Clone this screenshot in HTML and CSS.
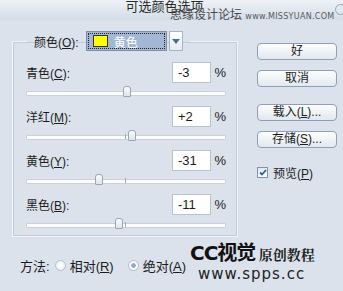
FILE: index.html
```html
<!DOCTYPE html>
<html lang="zh-CN">
<head>
    <meta charset="UTF-8">
    <title>可选颜色选项</title>
    <link rel="stylesheet" href="styles.css">
</head>
<body>
    <div class="dialog">
        <div class="titlebar">
            <span class="title">可选颜色选项</span>
            <span class="close"></span>
        </div>
        <div class="wm-top">思缘设计论坛 <span>www.MISSYUAN.COM</span></div>

        <div class="main">
            <fieldset class="group">
                <legend>
                    <span class="lbl">颜色(<u>O</u>):</span>
                    <span class="select">
                        <span class="select-val"><i class="swatch"></i>黄色</span>
                        <span class="select-arr"></span>
                    </span>
                </legend>

                <div class="row">
                    <div class="row-top">
                        <span class="lbl">青色(<u>C</u>):</span>
                        <span class="num">-3</span>
                        <span class="pct">%</span>
                    </div>
                    <div class="slider"><i class="tick"></i><i class="thumb" style="left: 97px"></i></div>
                </div>
                <div class="row">
                    <div class="row-top">
                        <span class="lbl">洋红(<u>M</u>):</span>
                        <span class="num">+2</span>
                        <span class="pct">%</span>
                    </div>
                    <div class="slider"><i class="tick"></i><i class="thumb" style="left: 102px"></i></div>
                </div>
                <div class="row">
                    <div class="row-top">
                        <span class="lbl">黄色(<u>Y</u>):</span>
                        <span class="num">-31</span>
                        <span class="pct">%</span>
                    </div>
                    <div class="slider"><i class="tick"></i><i class="thumb" style="left: 69px"></i></div>
                </div>
                <div class="row">
                    <div class="row-top">
                        <span class="lbl">黑色(<u>B</u>):</span>
                        <span class="num">-11</span>
                        <span class="pct">%</span>
                    </div>
                    <div class="slider"><i class="tick"></i><i class="thumb" style="left: 89px"></i></div>
                </div>
            </fieldset>

            <div class="side">
                <a href="javascript:;" class="btn">好</a>
                <a href="javascript:;" class="btn">取消</a>
                <a href="javascript:;" class="btn btn-gap">载入(<u>L</u>)...</a>
                <a href="javascript:;" class="btn">存储(<u>S</u>)...</a>
                <label class="check">
                    <span class="box">
                        <svg width="8" height="7" viewBox="0 0 8 7"><path d="M1 3.5 L3 5.5 L7 1" fill="none" stroke="#2f5f9e" stroke-width="1.8"/></svg>
                    </span>
                    <span>预览(<u>P</u>)</span>
                </label>
            </div>
        </div>

        <div class="method">
            <span>方法:</span>
            <span class="radio"><i class="dot"></i><span>相对(<u>R</u>)</span></span>
            <span class="radio on"><i class="dot"></i><span>绝对(<u>A</u>)</span></span>
        </div>

        <div class="wm-bottom">
            <div class="wm-line1"><b>CC视觉</b> <span>原创教程</span></div>
            <div class="wm-line2">www.spps.cc</div>
        </div>
    </div>
</body>
</html>
```

FILE: styles.css
```css
*{
    padding: 0;
    margin: 0;
    box-sizing: border-box;
}
a{
    text-decoration: none;
    color: inherit;
}
u{
    text-decoration: underline;
    text-underline-offset: 1px;
}
body{
    width: 343px;
    height: 291px;
    overflow: hidden;
    background-color: #dbe2eb;
    font-family: "Liberation Sans", "Noto Sans CJK SC", sans-serif;
    font-size: 12px;
    color: #1c1c1c;
}
.dialog{
    position: relative;
    height: 291px;
}
.titlebar{
    height: 20px;
    background: linear-gradient(#eef2f7, #d3dce7);
    position: relative;
    text-align: center;
    padding-right: 14px;
}
.titlebar .title{
    font-size: 13px;
    line-height: 14px;
    color: #2b2b2b;
}
.titlebar .close{
    position: absolute;
    right: -3px;
    top: 4px;
    width: 11px;
    height: 11px;
    border: 1px solid #9aa6b4;
    border-radius: 50%;
}
.wm-top{
    position: absolute;
    left: 170px;
    top: 8px;
    font-size: 12px;
    line-height: 14px;
    color: #4a4a4a;
}
.wm-top span{
    font-size: 8px;
    letter-spacing: 0.3px;
    color: #5a5a5a;
    font-family: "DejaVu Sans", sans-serif;
}

.main{
    display: flex;
    gap: 19px;
    padding: 11px 0 0 12px;
}
.group{
    width: 226px;
    height: 206px;
    border: 1px solid #f2f5f8;
    box-shadow: 0 0 0 1px #c3cdd9 inset;
    padding: 11px 0 0 13px;
}
.group legend{
    margin-left: 1px;
    padding: 0 7px;
    display: flex;
    align-items: center;
    gap: 7px;
}
.select{
    display: flex;
    height: 20px;
}
.select-val{
    width: 81px;
    height: 20px;
    border: 1px solid #7f8fa5;
    background-color: #a3b7d4;
    color: #fff;
    display: flex;
    align-items: center;
    padding-left: 6px;
    gap: 6px;
    outline: 1px dotted #222;
    outline-offset: -3px;
}
.swatch{
    width: 15px;
    height: 12px;
    background-color: #ffff00;
    border: 1px solid #333;
}
.select-arr{
    width: 14px;
    height: 20px;
    background: linear-gradient(#ffffff, #e6ebf2);
    border: 1px solid #a7b4c4;
    margin-left: 2px;
    position: relative;
}
.select-arr::after{
    content: "";
    position: absolute;
    left: 2px;
    top: 7px;
    border-left: 4px solid transparent;
    border-right: 4px solid transparent;
    border-top: 5px solid #4d6c9a;
}

.row-top{
    display: flex;
    align-items: center;
    height: 21px;
    padding-right: 11px;
}
.row-top .lbl{
    flex: 1;
}
.num{
    width: 39px;
    height: 21px;
    background-color: #fff;
    border: 1px solid #b5c3d3;
    padding-left: 5px;
    line-height: 19px;
    font-size: 13px;
}
.pct{
    width: 15px;
    text-align: right;
    font-size: 13px;
}
.slider{
    position: relative;
    height: 23px;
    width: 200px;
}
.row:last-child .slider{
    height: 20px;
}
.slider::before{
    content: "";
    position: absolute;
    left: 0;
    right: 0;
    top: 8px;
    height: 3px;
    background-color: #fbfcfd;
    border: 1px solid #c9d2dc;
    border-radius: 1px;
}
.tick{
    position: absolute;
    left: 99px;
    top: 7px;
    width: 1px;
    height: 5px;
    background-color: #9eaabb;
}
.thumb{
    position: absolute;
    top: 3px;
    width: 8px;
    height: 11px;
    background: linear-gradient(#fbfcfd, #dfe5ec);
    border: 1px solid #98a6b7;
    border-radius: 3px 3px 1px 1px;
}

.side{
    padding-top: 12px;
    width: 80px;
}
.btn{
    display: block;
    width: 80px;
    height: 17px;
    line-height: 15px;
    text-align: center;
    border: 1px solid #8da0b8;
    border-radius: 4px;
    background: linear-gradient(#fdfdfe, #e2e8ef);
    margin-bottom: 10px;
}
.btn-gap{
    margin-top: 17px;
}
.check{
    display: flex;
    align-items: center;
    gap: 5px;
    margin-top: 16px;
}
.box{
    width: 11px;
    height: 11px;
    border: 1px solid #7d93b2;
    background: linear-gradient(#dfe7f2, #fff);
    display: flex;
    align-items: center;
    justify-content: center;
}

.method{
    display: flex;
    align-items: center;
    padding: 19px 0 0 20px;
    gap: 4px;
    font-size: 13px;
}
.radio{
    display: flex;
    align-items: center;
    gap: 4px;
    margin-left: 1px;
}
.radio + .radio{
    margin-left: 10px;
}
.dot{
    width: 11px;
    height: 11px;
    border-radius: 50%;
    border: 1px solid #b4c0ce;
    background: radial-gradient(#ffffff, #e5eaf0);
}
.radio.on .dot{
    background: radial-gradient(circle, #8da6d2 0 2px, #ffffff 2.5px, #e5eaf0);
}

.wm-bottom{
    position: absolute;
    left: 190px;
    top: 242px;
}
.wm-line1{
    line-height: 22px;
}
.wm-line1 b{
    font-family: "DejaVu Sans", "Noto Sans CJK SC", sans-serif;
    font-size: 20px;
    font-weight: bold;
    color: #111;
    letter-spacing: -1px;
}
.wm-line1 span{
    font-family: "Noto Serif CJK SC", "Liberation Serif", serif;
    font-size: 14px;
    font-weight: bold;
    color: #222;
}
.wm-line2{
    font-family: "DejaVu Sans", sans-serif;
    font-size: 15px;
    line-height: 14px;
    padding-left: 8px;
    color: #222;
    letter-spacing: 1px;
}
```
